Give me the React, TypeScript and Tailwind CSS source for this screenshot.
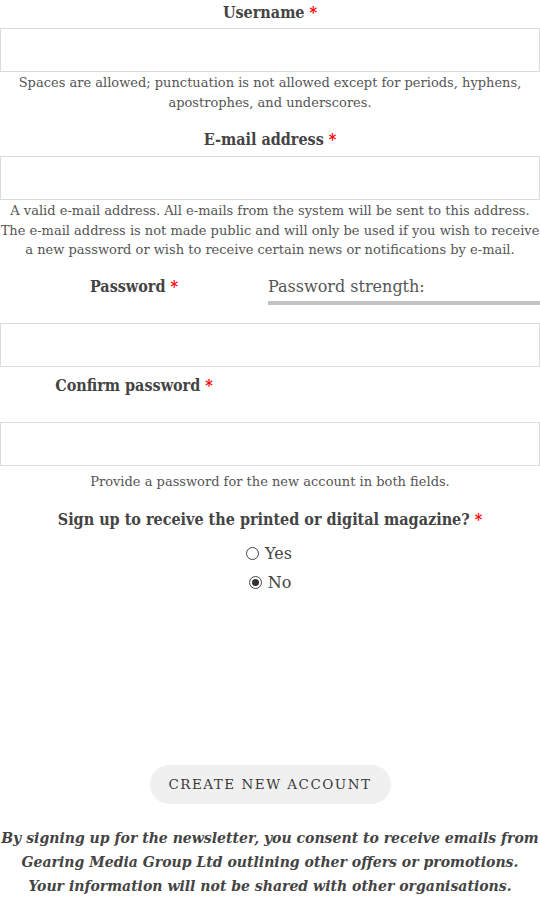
const serif = { fontFamily: '"DejaVu Serif", "Liberation Serif", serif' };
const condensed = { fontFamily: '"DejaVu Serif Condensed", "DejaVu Serif", serif' };

const Req = () => <span className="text-[#ff0000]"> *</span>;

const Field = ({ type = "text" }: { type?: string }) => (
  <input
    type={type}
    className="block w-full h-[44px] border border-[#dcdcdc] bg-white px-2 outline-none"
  />
);

const Help = ({ children }: { children: React.ReactNode }) => (
  <p className="text-center text-[13px] leading-[19.5px] text-[#555]">{children}</p>
);

const Label = ({ children, className = "" }: { children: React.ReactNode; className?: string }) => (
  <label
    className={"block text-center text-[16px] font-bold leading-[24px] text-[#444] " + className}
    style={condensed}
  >
    {children}
  </label>
);

export default function App() {
  return (
    <div className="w-[540px] bg-white text-[#444]" style={serif}>
      {/* Username */}
      <Label className="pt-[1px] pb-[3px]">
        Username<Req />
      </Label>
      <Field />
      <div className="pt-[1px]">
        <Help>
          Spaces are allowed; punctuation is not allowed except for periods, hyphens,
          <br />
          apostrophes, and underscores.
        </Help>
      </div>

      {/* Email */}
      <Label className="mt-[16px] pb-[4px]">
        E-mail address<Req />
      </Label>
      <Field type="email" />
      <div className="pt-[1px]">
        <Help>
          A valid e-mail address. All e-mails from the system will be sent to this address.
          The e-mail address is not made public and will only be used if you wish to receive
          a new password or wish to receive certain news or notifications by e-mail.
        </Help>
      </div>

      {/* Password */}
      <div className="flex mt-[15px] h-[48px]">
        <Label className="w-[268px]">
          Password<Req />
        </Label>
        <div className="flex-1">
          <div className="text-[16px] leading-[24px] text-[#555]">Password strength:</div>
          <div className="h-[4px] bg-[#c3c3c3] mt-[2px]" />
        </div>
      </div>
      <Field type="password" />
      <div className="flex h-[55px] pt-[7px]">
        <Label className="w-[268px]">
          Confirm password<Req />
        </Label>
      </div>
      <Field type="password" />
      <div className="pt-[6px]">
        <Help>Provide a password for the new account in both fields.</Help>
      </div>

      {/* Magazine */}
      <Label className="mt-[17px]">
        Sign up to receive the printed or digital magazine?<Req />
      </Label>
      <div className="flex flex-col items-center mt-[7px] text-[16px] leading-[29px] text-[#444]">
        <label className="flex items-center gap-[6px] pr-[2px]">
          <span className="w-[13px] h-[13px] rounded-full border border-[#444] bg-white" />
          Yes
        </label>
        <label className="flex items-center gap-[6px]">
          <span className="w-[13px] h-[13px] rounded-full border border-[#444] bg-white flex items-center justify-center">
            <span className="w-[7px] h-[7px] rounded-full bg-[#333]" />
          </span>
          No
        </label>
      </div>

      {/* Submit */}
      <div className="flex justify-center mt-[168px]">
        <button className="h-[39px] w-[241px] rounded-full bg-[#f0f0f0] text-[13.5px] tracking-[1.5px] text-[#3a3a3a]">
          CREATE NEW ACCOUNT
        </button>
      </div>

      <p
        className="text-center italic font-semibold text-[15.6px] leading-[24px] text-[#444] mt-[22px] pb-[3px] whitespace-nowrap"
        style={condensed}
      >
        By signing up for the newsletter, you consent to receive emails from
        <br />
        Gearing Media Group Ltd outlining other offers or promotions.
        <br />
        Your information will not be shared with other organisations.
      </p>
    </div>
  );
}
